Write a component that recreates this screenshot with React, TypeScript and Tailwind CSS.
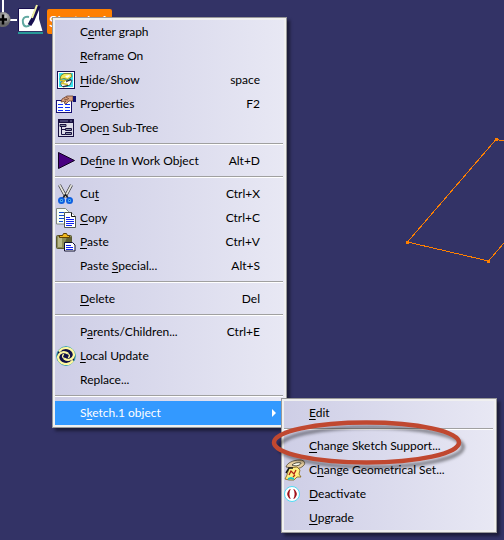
import React from 'react';

interface Entry {
  label: string;
  // index of the underlined access key, -1 when there is none
  hot: number;
  shortcut?: string;
  icon?: React.ReactNode;
  active?: boolean;
}

const Icon: React.FC<{ children: React.ReactNode }> = ({ children }) => (
  <svg viewBox="0 0 20 20" className="size-5 overflow-visible" aria-hidden="true">
    {children}
  </svg>
);

const HideShowIcon = () => (
  <Icon>
    <rect x="1.5" y="1.5" width="17" height="17" fill="#fff" stroke="#181050" />
    <rect x="3" y="3" width="14" height="14" fill="#35e4f0" />
    <path d="M8 3.500h7l1 3-4 3-4-1-4 1 1-4z" fill="#f2e858" stroke="#6b5a10" strokeWidth="0.7" />
    <path d="M9 6l4-1 1 1-3 2z" fill="#fff" />
    <path d="M5 12l4-2 3 1 4-1-2 5-3 1-4 1-2-2z" fill="#fff" stroke="#202030" strokeWidth="0.7" />
    <path d="M4 10.500l5 0l-3 3l6 1" fill="none" stroke="#d4c030" strokeWidth="1.5" />
    <path d="M10 12l5-3M7 16.500l5-1" stroke="#202030" />
  </Icon>
);

const PropertiesIcon = () => (
  <Icon>
    <rect x="0.5" y="6.5" width="15" height="12" fill="#fff" stroke="#181070" />
    <path d="M2 10.5h5M9 10.5h5M2 13.5h5M9 13.5h5M2 16.5h5M9 16.5h5" stroke="#1030ff" />
    <path d="M6 5l5-3h6v5h-4l-3 3-2-1 2-2-5 1z" fill="#d8a080" stroke="#6b4030" strokeWidth="0.8" />
    <path d="M8 5l4 1M10 3l3 2" stroke="#6b4030" strokeWidth="0.8" />
    <rect x="17" y="2" width="3" height="6" fill="#101070" />
  </Icon>
);

const SubTreeIcon = () => (
  <Icon>
    <rect x="2.5" y="1.5" width="15" height="17" fill="#dcdce8" stroke="#181040" />
    <rect x="2" y="1" width="16" height="4" fill="#181040" />
    <path d="M4 3h8M14 3h2" stroke="#7070a0" />
    <path d="M5.5 7v9.5h4M5.5 11.5h4" fill="none" stroke="#181040" />
    <path d="M4 6.5h6v2h-6zM9.500 10.500h6v2h-6zM9.500 14.500h6v2h-6z" fill="#8890a0" stroke="#181040" />
  </Icon>
);

const WorkObjectIcon = () => (
  <Icon>
    <path d="M2.500 1.500v16l16-8z" fill="#480080" stroke="#100020" />
  </Icon>
);

const CutIcon = () => (
  <Icon>
    <path d="M3.500 1l6.500 12M15.500 1l-6.500 12" stroke="#303030" strokeWidth="3" />
    <path d="M3.500 1l6.500 12M15.500 1l-6.500 12" stroke="#e4e4dc" strokeWidth="1.700" />
    <path d="M9.500 10.500l-3 4M9.500 10.500l3 4" stroke="#202020" strokeWidth="1.500" />
    <circle cx="5.500" cy="16.500" r="2.500" fill="#60d0ff" stroke="#1060e0" strokeWidth="2" />
    <circle cx="13.500" cy="16.500" r="2.500" fill="#60d0ff" stroke="#1060e0" strokeWidth="2" />
    <circle cx="5.500" cy="16.500" r="0.800" fill="#0838b0" />
    <circle cx="13.500" cy="16.500" r="0.800" fill="#0838b0" />
  </Icon>
);

const CopyIcon = () => (
  <Icon>
    <path d="M0.500 0.500h9l3 3v12.500h-12z" fill="#f8fff8" stroke="#808880" />
    <path d="M3 4.500h5M3 7.500h5M3 10.500h5M3 13.500h4" stroke="#1048d0" />
    <path d="M8.500 4.500h7l4 4v11h-11z" fill="#fff" stroke="#505850" />
    <path d="M15.500 4.500v4h4" fill="#fff" stroke="#101010" />
    <path d="M10 9.500h4M10 11.500h8M10 13.500h8M10 15.500h8M10 17.500h6" stroke="#1020f0" />
  </Icon>
);

const PasteIcon = () => (
  <Icon>
    <rect x="0.500" y="3.500" width="15" height="13" rx="1" fill="#8c8c58" stroke="#585830" />
    <path d="M2 5h4v10h-4z" fill="#b8b888" />
    <path d="M11 5h4v8h-7z" fill="#606030" />
    <path d="M3.500 5.500v-2h3l1-2h3l1 2h2v2z" fill="#f0b820" stroke="#604000" />
    <path d="M8.500 10.500h8l2.500 2.500v6h-10.500z" fill="#fff" stroke="#101030" />
    <path d="M10 13.500h5M10 15.500h7M10 17.500h7" stroke="#1020f0" />
  </Icon>
);

const UpdateIcon = () => (
  <Icon>
    <circle cx="10" cy="10" r="9.300" fill="#101048" stroke="#28a8b0" />
    <path d="M3 5.500C7 0 17 1 18 9C17 14 12 15 8 12.500" fill="none" stroke="#fff8a0" strokeWidth="2.200" />
    <path d="M17 14.500C13 20 3 19 2 11C3 6 8 5 12 7.500" fill="none" stroke="#fff8a0" strokeWidth="2.200" />
    <path d="M8 12.500C6 11 6 9 8 8.500M12 7.500C14 9 14 11 12 11.500" fill="none" stroke="#fff8a0" strokeWidth="1.300" />
  </Icon>
);

const GeometricalSetIcon = () => (
  <Icon>
    <path d="M1 7c1-4 7-7 14-7c5 0 6 4 3 6c-3 3-8 3-11 2z" fill="#e8cfa0" stroke="#504830" strokeWidth="0.8" />
    <path d="M7 5c2-2 6-3 9-2c0 2-5 4-9 2z" fill="#fffdf0" stroke="#303020" strokeWidth="0.8" />
    <path d="M4 8l8-1l3 3l-1 4l2 3l-4 0l-3 3h-5l-4-1l2-4z" fill="#fff080" stroke="#806010" strokeWidth="0.8" />
    <path d="M1 13l3-5l4 0" fill="none" stroke="#181818" strokeWidth="1.500" />
    <path d="M4 15l2-4l3 3l2-4M8 17l2-2" fill="none" stroke="#b02010" strokeWidth="1.300" />
    <path d="M3 19l3-1l3 1" fill="none" stroke="#20c0c8" strokeWidth="2" />
  </Icon>
);

const DeactivateIcon = () => (
  <Icon>
    <circle cx="7" cy="10" r="7.500" fill="#fff" stroke="#50dcf4" />
    <path d="M5 5.500c-3 3-3 6 0 9c-1.500-3-1.500-6 0-9zM9 5.500c3 3 3 6 0 9c1.500-3 1.500-6 0-9z" fill="#a01018" stroke="#a01018" />
  </Icon>
);

const objectMenu: Entry[][] = [
  [
    { label: 'Center graph', hot: 1 },
    { label: 'Reframe On', hot: 0 },
    { label: 'Hide/Show', hot: 0, shortcut: 'space', icon: <HideShowIcon /> },
    { label: 'Properties', hot: 2, shortcut: 'F2', icon: <PropertiesIcon /> },
    { label: 'Open Sub-Tree', hot: 3, icon: <SubTreeIcon /> },
  ],
  [{ label: 'Define In Work Object', hot: 2, shortcut: 'Alt+D', icon: <WorkObjectIcon /> }],
  [
    { label: 'Cut', hot: 2, shortcut: 'Ctrl+X', icon: <CutIcon /> },
    { label: 'Copy', hot: 0, shortcut: 'Ctrl+C', icon: <CopyIcon /> },
    { label: 'Paste', hot: 0, shortcut: 'Ctrl+V', icon: <PasteIcon /> },
    { label: 'Paste Special...', hot: 6, shortcut: 'Alt+S' },
  ],
  [{ label: 'Delete', hot: 0, shortcut: 'Del' }],
  [
    { label: 'Parents/Children...', hot: 1, shortcut: 'Ctrl+E' },
    { label: 'Local Update', hot: 0, icon: <UpdateIcon /> },
    { label: 'Replace...', hot: -1 },
  ],
  [{ label: 'Sketch.1 object', hot: 1, active: true }],
];

const sketchMenu: Entry[][] = [
  [{ label: 'Edit', hot: 0 }],
  [
    { label: 'Change Sketch Support...', hot: 0 },
    { label: 'Change Geometrical Set...', hot: 1, icon: <GeometricalSetIcon /> },
    { label: 'Deactivate', hot: 0, icon: <DeactivateIcon /> },
    { label: 'Upgrade', hot: 0 },
  ],
];

const MenuItem: React.FC<{ entry: Entry }> = ({ entry }) => {
  const { label, hot, shortcut, icon, active } = entry;
  return (
    <button
      type="button"
      role="menuitem"
      aria-haspopup={active ? 'menu' : undefined}
      className={`flex h-6 w-full items-center whitespace-nowrap pl-px text-left ${
        active ? 'bg-[#3399ff] pr-2 text-white' : 'pr-6 text-black'
      }`}
    >
      <span className="w-6 shrink-0">{icon}</span>
      <span className="flex-1">
        {hot < 0 ? label : (
          <>
            {label.slice(0, hot)}
            <span className="underline underline-offset-2">{label[hot]}</span>
            {label.slice(hot + 1)}
          </>
        )}
      </span>
      {shortcut && <span>{shortcut}</span>}
      {active && (
        <svg viewBox="0 0 4 8" className="h-2 w-1" aria-hidden="true">
          <path d="M0 0l4 4l-4 4z" fill="#fff" />
        </svg>
      )}
    </button>
  );
};

const Menu: React.FC<{ groups: Entry[][]; name: string; className: string }> = ({ groups, name, className }) => (
  <div
    role="menu"
    aria-label={name}
    className={`absolute border border-[#999] bg-[#f0f0f0] p-0.5 shadow-[3px_3px_3px_rgba(0,0,0,0.45)] ${className}`}
  >
    <div className="bg-linear-to-r from-[#cecee6] to-[#e8e8f4]">
      {groups.map((group, i) => (
        <div key={i}>
          {i > 0 && (
            <div role="separator" className="mr-px h-[9px] pt-[3px]">
              <div className="h-0.5 border-t border-b border-t-[#a0a0a0] border-b-white" />
            </div>
          )}
          {group.map((entry) => <MenuItem key={entry.label} entry={entry} />)}
        </div>
      ))}
    </div>
  </div>
);

const TreeNode = () => (
  <div className="flex items-start">
    <svg viewBox="0 0 47 36" className="h-9 w-[47px] shrink-0" aria-hidden="true">
      <defs>
        <radialGradient id="knob" cx="0.6" cy="0.3">
          <stop offset="0" stopColor="#d0d0d0" />
          <stop offset="1" stopColor="#686868" />
        </radialGradient>
      </defs>
      <path d="M3 0v14M8 20h9" stroke="#fff" strokeWidth="2" />
      <circle cx="3" cy="19.500" r="7.500" fill="url(#knob)" />
      <path d="M-2 19.500h9M3 14.500v10" stroke="#000" strokeWidth="2.500" />
      <path d="M19 9h20v10l3.500 12h-23.500z" fill="#fff" />
      <path d="M18.500 31v-22.500h16" fill="none" stroke="#181050" />
      <path d="M18 33h25" stroke="#289898" strokeWidth="2" />
      <path d="M29 17c-5-1-7 2-6 6c1 5 7 4 7 0c0-3 2-4 3-3" fill="none" stroke="#60a8a0" strokeWidth="2" />
      <path d="M29.500 25l3-5l6-14" fill="none" stroke="#181050" strokeWidth="4" />
      <path d="M32 18l5-13" stroke="#f0f0a0" strokeWidth="2" />
    </svg>
    <span className="mt-[9px] h-[25px] w-[65px] rounded-xs bg-[#ff8000] px-0.5 pt-0.5 text-base leading-5 text-white">Sketch.1</span>
  </div>
);

const SketchProfile = () => (
  <svg viewBox="0 0 100 130" className="absolute top-[136px] left-[404px] h-[130px] w-[100px]" shapeRendering="crispEdges" aria-label="Sketch.1">
    <path d="M100 5l-8-1.500l-88.500 102.500l81 19l15.500-18" fill="none" stroke="#ff8000" />
    <path d="M91 2h3v3h-3zM2 105h3v3h-3zM83 124h3v3h-3z" fill="#ff8000" />
  </svg>
);

const Highlight = () => (
  <svg viewBox="0 0 200 56" className="pointer-events-none absolute top-[416px] left-[268px] h-14 w-[200px]" aria-hidden="true">
    <defs>
      <filter id="soft" x="-10%" y="-20%" width="120%" height="140%">
        <feGaussianBlur stdDeviation="1.500" />
      </filter>
    </defs>
    <ellipse cx="103" cy="31" rx="92" ry="20" fill="none" stroke="#000" strokeOpacity="0.4" strokeWidth="4" filter="url(#soft)" />
    <ellipse cx="98.500" cy="26.500" rx="92.500" ry="20" fill="none" stroke="#c04830" strokeWidth="4.500" />
  </svg>
);

export default function App() {
  return (
    <main className="relative min-h-screen overflow-hidden bg-[#333366] font-['Lato','Noto_Sans',sans-serif] text-xs">
      <TreeNode />
      <SketchProfile />
      <Menu groups={objectMenu} name="Sketch.1" className="top-[17px] left-[52px] w-[235px]" />
      <Menu groups={sketchMenu} name="Sketch.1 object" className="top-[398px] left-[281px] w-[216px]" />
      <Highlight />
    </main>
  );
}
